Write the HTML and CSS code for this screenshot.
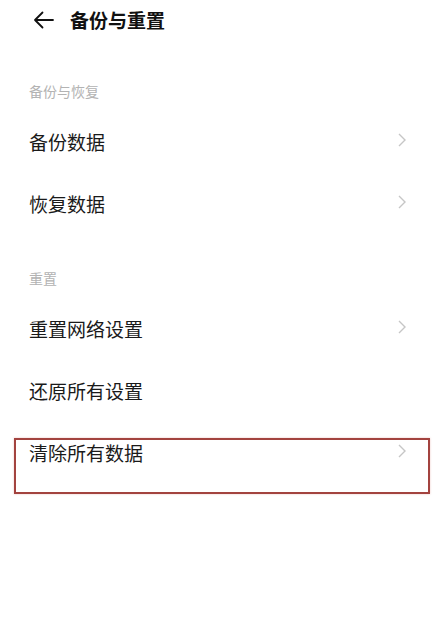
FILE: index.html
```html
<!DOCTYPE html>
<html lang="zh-CN">
<head>
<meta charset="UTF-8">
<meta name="viewport" content="width=device-width, initial-scale=1.0">
<title>备份与重置</title>
<link rel="stylesheet" href="styles.css">
</head>
<body>

  <!-- 顶部栏 -->
  <header class="top-bar">
    <svg class="back-icon" width="21" height="18" viewBox="0 0 21 18">
      <path d="M20 9H2M9.5 1.5L2 9l7.5 7.5" fill="none" stroke="#111" stroke-width="1.8" stroke-linecap="round" stroke-linejoin="round"/>
    </svg>
    <h1 class="page-title">备份与重置</h1>
  </header>

  <section class="group">
    <div class="group-title">备份与恢复</div>
    <div class="item">
      <span>备份数据</span>
      <svg class="chevron" width="10" height="16" viewBox="0 0 10 16"><path d="M2 2l6 6-6 6" fill="none" stroke="#c6c6c6" stroke-width="1.4"/></svg>
    </div>
    <div class="item">
      <span>恢复数据</span>
      <svg class="chevron" width="10" height="16" viewBox="0 0 10 16"><path d="M2 2l6 6-6 6" fill="none" stroke="#c6c6c6" stroke-width="1.4"/></svg>
    </div>
  </section>

  <section class="group">
    <div class="group-title">重置</div>
    <div class="item">
      <span>重置网络设置</span>
      <svg class="chevron" width="10" height="16" viewBox="0 0 10 16"><path d="M2 2l6 6-6 6" fill="none" stroke="#c6c6c6" stroke-width="1.4"/></svg>
    </div>
    <div class="item">
      <span>还原所有设置</span>
    </div>
    <div class="item item-marked">
      <span>清除所有数据</span>
      <svg class="chevron" width="10" height="16" viewBox="0 0 10 16"><path d="M2 2l6 6-6 6" fill="none" stroke="#c6c6c6" stroke-width="1.4"/></svg>
    </div>
  </section>

</body>
</html>
```

FILE: styles.css
```css
html, body {
  min-height: 100%;
}

body {
  margin: 0;
  background: #fff;
  color: #1a1a1a;
  font-family: "Noto Sans CJK SC", "Noto Sans", sans-serif;
}

.top-bar {
  height: 40px;
  padding-left: 33px;
  display: flex;
  align-items: center;
  gap: 16px;
}

.back-icon {
  display: block;
}

.page-title {
  margin: 0;
  font-size: 19px;
  font-weight: bold;
  color: #111;
  line-height: 40px;
}

.group-title {
  padding: 41px 29px 9px;
  font-size: 14px;
  line-height: 20px;
  color: #b3b3b3;
}

.group + .group .group-title {
  padding-top: 34px;
}

.group:last-child {
  padding-bottom: 60px;
}

.item {
  height: 62px;
  padding: 0 30px 0 29px;
  display: flex;
  align-items: center;
  justify-content: space-between;
  font-size: 19px;
}

.chevron {
  display: block;
  margin-top: -2px;
}

/* 红框标注 */
.item-marked {
  position: relative;
}

.item-marked::after {
  content: "";
  position: absolute;
  top: 17px;
  bottom: -11px;
  left: 14px;
  right: 7px;
  border: 2px solid #a3433f;
  box-shadow: 0 0 2px rgba(200, 90, 80, 0.35);
}
```
